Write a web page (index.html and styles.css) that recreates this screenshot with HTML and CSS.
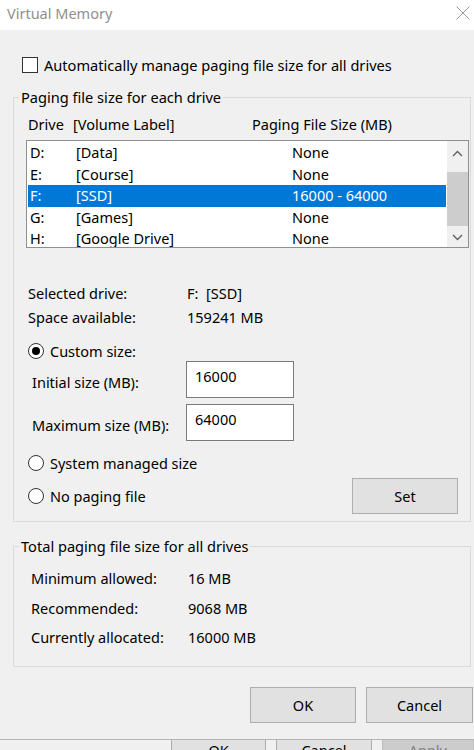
FILE: index.html
```html
<!DOCTYPE html>
<html>
<head>
<meta charset="utf-8">
<link rel="stylesheet" href="styles.css">
</head>
<body>
<div class="dialog">
  <div class="titlebar">
    <span class="title">Virtual Memory</span>
    <svg class="close" width="14" height="14" viewBox="0 0 14 14"><path d="M0.5 0.5 L13.5 13.5 M13.5 0.5 L0.5 13.5" stroke="#9a9a9a" stroke-width="1" fill="none"/></svg>
  </div>

  <div class="auto-row">
    <span class="checkbox"></span>
    <span>Automatically manage paging file size for all drives</span>
  </div>

  <fieldset class="group group-drives">
    <legend>Paging file size for each drive</legend>
    <div class="group-body">
      <div class="list-head">
        <span class="h-drive">Drive</span><span class="h-label">[Volume Label]</span><span class="h-size">Paging File Size (MB)</span>
      </div>
      <div class="listbox">
        <div class="rows">
          <div class="row"><span class="c-drive">D:</span><span class="c-label">[Data]</span><span class="c-size">None</span></div>
          <div class="row"><span class="c-drive">E:</span><span class="c-label">[Course]</span><span class="c-size">None</span></div>
          <div class="row selected"><span class="c-drive">F:</span><span class="c-label">[SSD]</span><span class="c-size">16000 - 64000</span></div>
          <div class="row"><span class="c-drive">G:</span><span class="c-label">[Games]</span><span class="c-size">None</span></div>
          <div class="row"><span class="c-drive">H:</span><span class="c-label">[Google Drive]</span><span class="c-size">None</span></div>
        </div>
        <div class="scrollbar">
          <svg class="arrow" width="11" height="7" viewBox="0 0 11 7"><path d="M1 6 L5.5 1.5 L10 6" stroke="#606060" stroke-width="1.4" fill="none"/></svg>
          <div class="thumb"></div>
          <svg class="arrow arrow-down" width="11" height="7" viewBox="0 0 11 7"><path d="M1 1 L5.5 5.5 L10 1" stroke="#606060" stroke-width="1.4" fill="none"/></svg>
        </div>
      </div>

      <div class="info">
        <div class="info-row"><span class="info-label">Selected drive:</span><span>F:&nbsp; [SSD]</span></div>
        <div class="info-row"><span class="info-label">Space available:</span><span>159241 MB</span></div>
      </div>

      <div class="radio-row radio-custom"><span class="radio checked"></span><span>Custom size:</span></div>
      <div class="field-row field-initial"><span class="field-label">Initial size (MB):</span><span class="input">16000</span></div>
      <div class="field-row field-max"><span class="field-label">Maximum size (MB):</span><span class="input">64000</span></div>
      <div class="radio-row radio-system"><span class="radio"></span><span>System managed size</span></div>
      <div class="nopaging-row">
        <div class="radio-row"><span class="radio"></span><span>No paging file</span></div>
        <button class="btn btn-set">Set</button>
      </div>
    </div>
  </fieldset>

  <fieldset class="group group-total">
    <legend>Total paging file size for all drives</legend>
    <div class="total-body">
      <div class="total-row"><span class="total-label">Minimum allowed:</span><span>16 MB</span></div>
      <div class="total-row"><span class="total-label">Recommended:</span><span>9068 MB</span></div>
      <div class="total-row"><span class="total-label">Currently allocated:</span><span>16000 MB</span></div>
    </div>
  </fieldset>

  <div class="actions">
    <button class="btn btn-ok">OK</button>
    <button class="btn btn-cancel">Cancel</button>
  </div>
</div>
<div class="parent-strip">
  <button class="pbtn pbtn-ok">OK</button>
  <button class="pbtn pbtn-cancel">Cancel</button>
  <button class="pbtn pbtn-apply">Apply</button>
</div>
</body>
</html>
```

FILE: styles.css
```css
html, body {
  margin: 0;
  padding: 0;
}
body {
  width: 474px;
  height: 750px;
  overflow: hidden;
  background: #f0f0f0;
  font-family: "Noto Sans", "Open Sans", sans-serif;
  font-size: 14.5px;
  color: #000;
}
.dialog {
  height: 739px;
  border-bottom: 1px solid #b4b4b4;
  box-sizing: content-box;
  background: #f0f0f0;
}
.titlebar {
  height: 30px;
  background: #fff;
  display: flex;
  align-items: center;
  justify-content: space-between;
  padding: 0 4px 4px 7px;
  box-sizing: border-box;
}
.title {
  color: #909090;
  font-size: 14.5px;
}
.close {
  margin-right: 0;
}
.auto-row {
  margin: 27px 0 0 22px;
  height: 16px;
  display: flex;
  align-items: center;
  gap: 6px;
  font-size: 14.6px;
}
.checkbox {
  width: 16px;
  height: 16px;
  box-sizing: border-box;
  border: 1px solid #333;
  background: #fff;
}
.group {
  margin: 0 3px 0 13px;
  padding: 0;
  border: 1px solid #dadada;
  min-width: 0;
}
.group legend {
  margin-left: 5px;
  padding: 0 2px;
  line-height: 20px;
  font-size: 14.6px;
}
.group-drives {
  margin-top: 14px;
}
.group-body {
  padding: 0 0 7px 12px;
}
.list-head {
  margin-top: 7px;
  height: 20px;
  line-height: 20px;
  display: flex;
  padding-left: 2px;
}
.h-drive { width: 45px; }
.h-label { width: 179px; }
.listbox {
  margin-top: 6px;
  width: 443px;
  height: 108px;
  box-sizing: border-box;
  border: 1px solid #8f8f8f;
  background: #fff;
  display: flex;
  overflow: hidden;
}
.rows {
  width: 418px;
  padding: 1px;
}
.row {
  height: 21.5px;
  line-height: 21.5px;
  display: flex;
  padding-left: 2px;
}
.row.selected {
  background: #0078d7;
  color: #fff;
}
.c-drive { width: 46px; }
.c-label { width: 216px; }
.scrollbar {
  width: 21px;
  background: #f0f0f0;
  display: flex;
  flex-direction: column;
  align-items: center;
}
.arrow {
  margin-top: 9px;
}
.thumb {
  margin-top: 15px;
  width: 21px;
  height: 54px;
  background: #cdcdcd;
}
.arrow-down {
  margin-top: 8px;
}
.info {
  margin-top: 33px;
}
.info-row {
  height: 24px;
  line-height: 24px;
  display: flex;
  padding-left: 2px;
}
.info-label { width: 159px; }
.radio-row {
  display: flex;
  align-items: center;
  gap: 6px;
  height: 20px;
  padding-left: 2px;
}
.radio {
  width: 16px;
  height: 16px;
  box-sizing: border-box;
  border: 1px solid #333;
  border-radius: 50%;
  background: #fff;
  display: flex;
  align-items: center;
  justify-content: center;
}
.radio.checked::after {
  content: "";
  width: 8px;
  height: 8px;
  border-radius: 50%;
  background: #000;
}
.radio-custom {
  margin-top: 12px;
}
.field-row {
  display: flex;
  align-items: center;
  height: 37px;
  padding-left: 6px;
}
.field-max {
  margin-top: 6px;
}
.field-label {
  width: 154px;
  padding-top: 4px;
}
.input {
  width: 108px;
  height: 37px;
  box-sizing: border-box;
  border: 1px solid #7a7a7a;
  background: #fff;
  padding: 4px 0 0 8px;
  line-height: 20px;
}
.radio-system {
  margin-top: 12px;
}
.nopaging-row {
  margin-top: 5px;
  height: 36px;
  display: flex;
  align-items: center;
  justify-content: space-between;
  padding-right: 12px;
}
.btn {
  font-family: inherit;
  font-size: 14.5px;
  color: #000;
  background: #e1e1e1;
  border: 1px solid #adadad;
  height: 36px;
  padding: 0;
}
.btn-set {
  width: 106px;
}
.group-total {
  margin-top: 14px;
}
.total-body {
  padding: 8px 0 13px 17px;
}
.total-row {
  height: 29.5px;
  line-height: 29.5px;
  display: flex;
}
.total-label { width: 157px; }
.actions {
  margin-top: 20px;
  display: flex;
  justify-content: flex-end;
  gap: 10px;
  padding-right: 1px;
}
.btn-ok { width: 106px; }
.btn-cancel { width: 107px; }
.parent-strip {
  height: 10px;
  overflow: hidden;
  display: flex;
  padding-left: 171px;
  gap: 10px;
}
.pbtn {
  font-family: inherit;
  font-size: 14.5px;
  height: 20px;
  line-height: 16px;
  padding: 2px 0 0;
  margin: 0;
  background: #e1e1e1;
  border: 1px solid #adadad;
  border-top: none;
  color: #000;
  width: 96px;
  display: flex;
  align-items: flex-start;
  justify-content: center;
}
.pbtn-apply {
  background: #cccccc;
  border-color: #bfbfbf;
  color: #838383;
  width: 93px;
}
```
